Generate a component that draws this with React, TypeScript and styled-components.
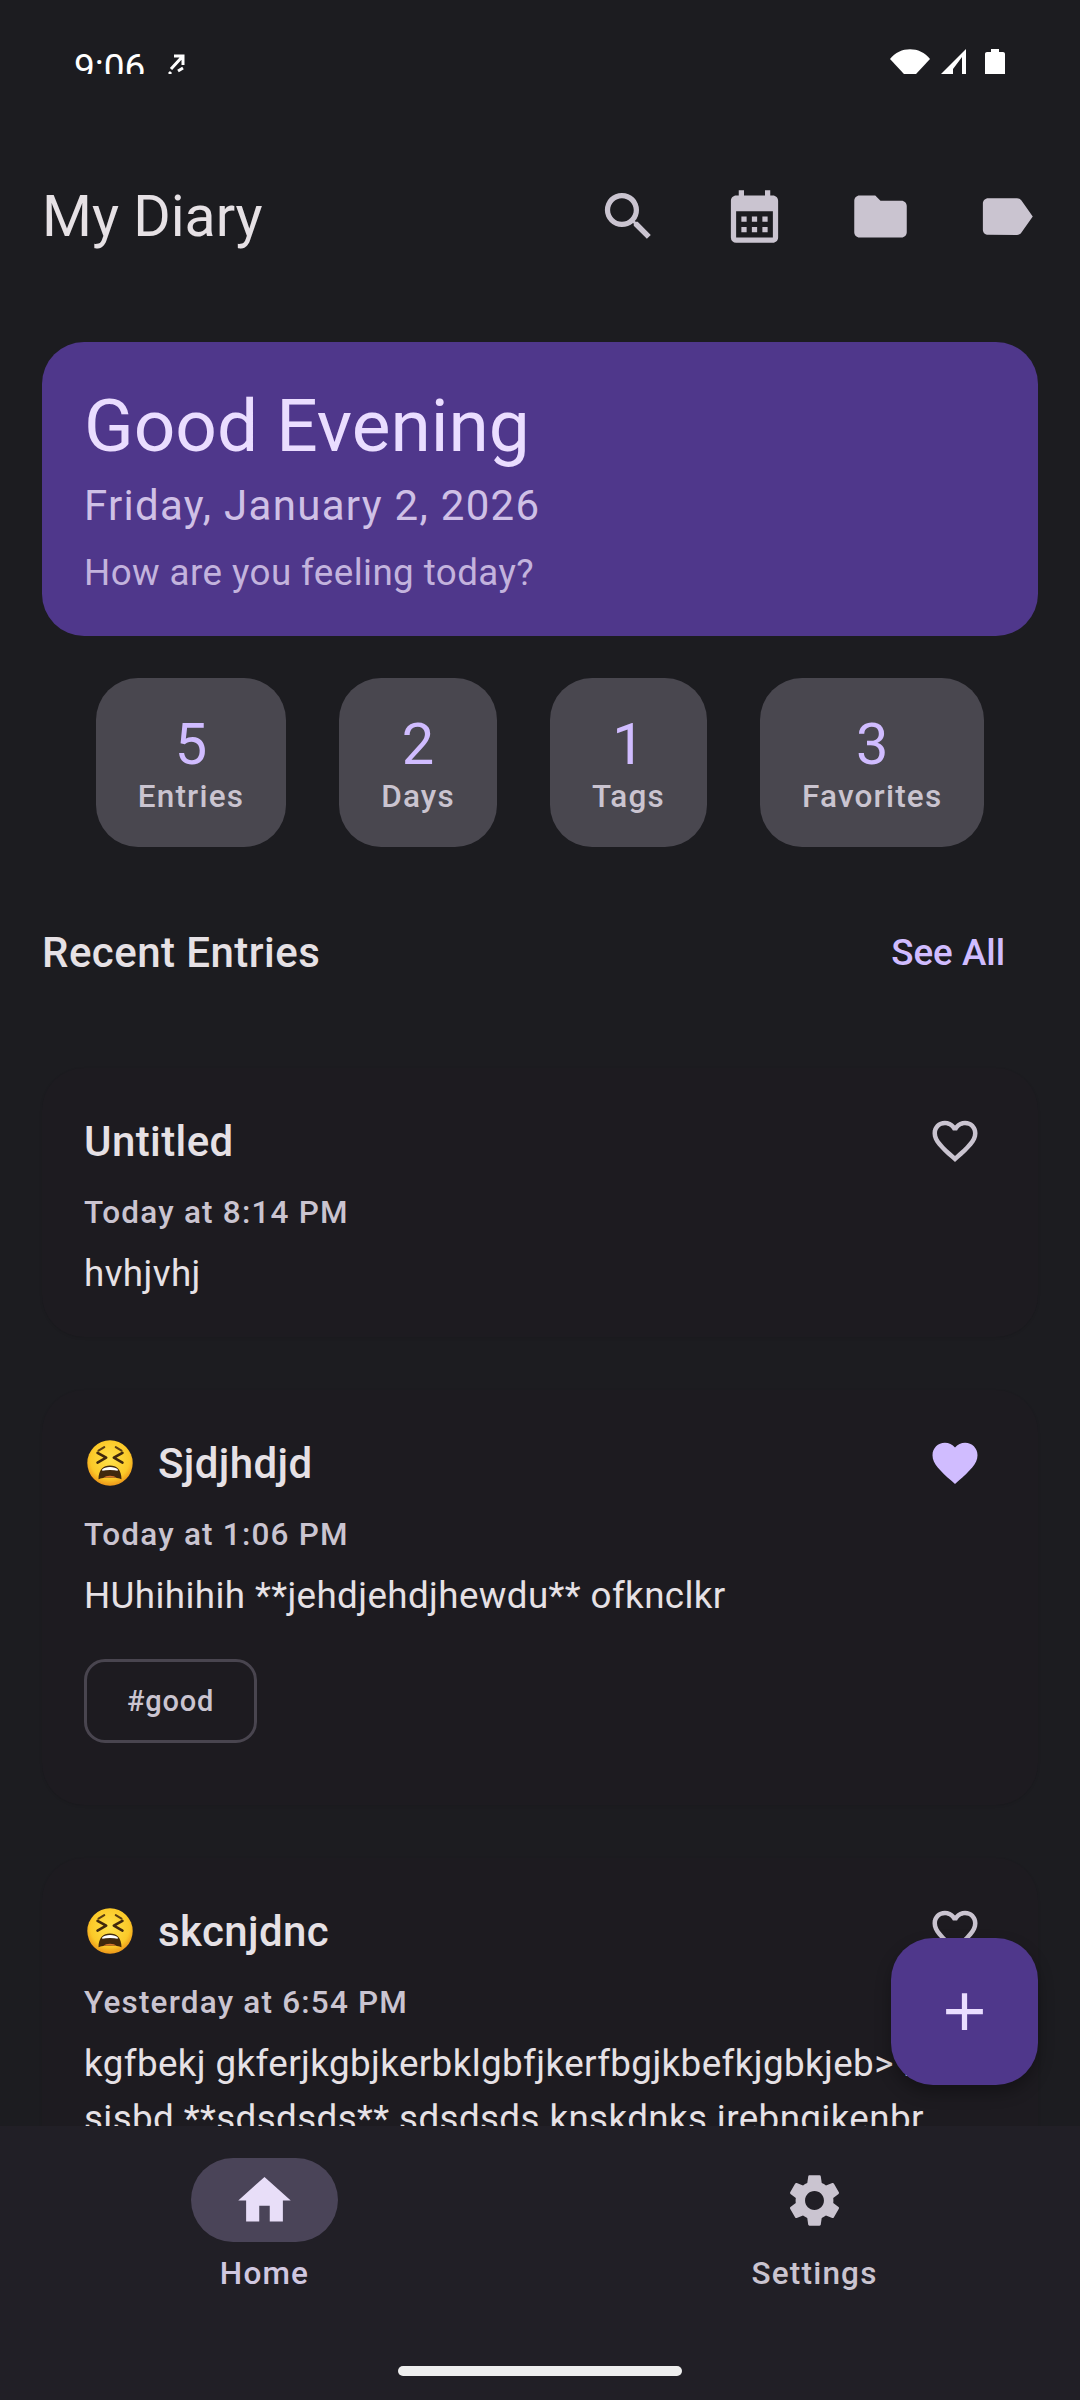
import React from "react";
import styled, { createGlobalStyle } from "styled-components";
import { MdSearch, MdCalendarMonth, MdFolder, MdLabel, MdHome, MdSettings, MdFavorite, MdFavoriteBorder, MdAdd } from "react-icons/md";

const GlobalStyle = createGlobalStyle`
  html, body {
    margin: 0;
    padding: 0;
    background: #1c1b1f;
  }
  * {
    box-sizing: border-box;
  }
`;

const Screen = styled.div`
  position: relative;
  display: flex;
  flex-direction: column;
  width: 1080px;
  height: 2400px;
  overflow: hidden;
  background: #1c1c20;
  font-family: Roboto, "Liberation Sans", sans-serif;
`;

const StatusClip = styled.div`
  display: flex;
  align-items: flex-start;
  justify-content: space-between;
  height: 74px;
  margin-bottom: 79px;
  padding: 46px 75px 0 74px;
  overflow: hidden;
  color: #fff;
  flex-shrink: 0;
`;

const StatusLeft = styled.div`
  display: flex;
  gap: 23px;
  align-items: flex-start;
  font-size: 37px;
  line-height: 43px;
`;

const StatusRight = styled.div`
  display: flex;
  align-items: flex-start;
  gap: 11px;
  margin-top: 3px;
`;

const SignalSvg = styled.svg`
  margin-right: 8px;
`;

const TopBar = styled.header`
  display: flex;
  align-items: center;
  justify-content: space-between;
  height: 126px;
  padding: 0 11px 0 42px;
  flex-shrink: 0;
`;

const Title = styled.h1`
  margin: 0;
  font-size: 57.2px;
  font-weight: 400;
  color: #e6e1e5;
`;

const TopActions = styled.div`
  display: flex;
`;

const ActionButton = styled.div`
  display: flex;
  align-items: center;
  justify-content: center;
  width: 126px;
  height: 126px;
  color: #cac4d0;
  font-size: 63px;
`;

const Scroll = styled.main`
  flex: 1;
  min-height: 0;
  overflow: hidden;
  padding: 63px 42px 0;
`;

const Hero = styled.section`
  display: flex;
  flex-direction: column;
  height: 294px;
  padding: 42px;
  border-radius: 42px;
  background: #4f378b;
`;

const Greeting = styled.div`
  font-size: 73px;
  line-height: 84px;
  color: #eaddff;
`;

const HeroDate = styled.div`
  margin-top: 13px;
  font-size: 42px;
  line-height: 50px;
  letter-spacing: 1.3px;
  color: #cfc0e6;
`;

const HeroPrompt = styled.div`
  margin-top: 17px;
  font-size: 36.75px;
  line-height: 50px;
  letter-spacing: 0.42px;
  color: #c3b3dd;
`;

const Stats = styled.section`
  display: flex;
  justify-content: center;
  gap: 53px;
  margin-top: 42px;
`;

const StatCard = styled.div`
  display: flex;
  flex-direction: column;
  align-items: center;
  justify-content: center;
  height: 169px;
  padding: 4px 42px 0;
  border-radius: 42px;
  background: #49474f;
`;

const StatValue = styled.div`
  font-size: 57.75px;
  line-height: 64px;
  color: #d0bcff;
`;

const StatLabel = styled.div`
  font-size: 31.5px;
  font-weight: 500;
  line-height: 42px;
  letter-spacing: 1.2px;
  color: #cac4d0;
`;

const SectionHeader = styled.div`
  display: flex;
  align-items: center;
  justify-content: space-between;
  margin-top: 77px;
  padding-right: 33px;
  height: 56px;
`;

const SectionTitle = styled.h2`
  margin: 0;
  font-size: 42px;
  font-weight: 500;
  letter-spacing: 0.45px;
  color: #e6e1e5;
`;

const SeeAll = styled.span`
  font-size: 36.75px;
  font-weight: 500;
  color: #d0bcff;
`;

const EntryList = styled.div`
  display: flex;
  flex-direction: column;
  gap: 53px;
  margin-top: 88px;
`;

const EntryCard = styled.article`
  padding: 42px 42px 36px;
  border-radius: 42px;
  background: #1d1b20;
  box-shadow: 0 1px 3px rgba(0, 0, 0, 0.1);
`;

const EntryHead = styled.div`
  display: flex;
  align-items: center;
  height: 62px;
`;

const EntryTitle = styled.h3`
  flex: 1;
  margin: 0;
  font-size: 42px;
  font-weight: 500;
  letter-spacing: 0.4px;
  color: #e6e1e5;
`;

const Mood = styled.svg`
  width: 46px;
  height: 46px;
  margin: 0 25px 0 3px;
  flex-shrink: 0;
`;

const Heart = styled.span<{ $on?: boolean }>`
  display: flex;
  margin-right: 14px;
  font-size: 54px;
  color: ${(p) => (p.$on ? "#d0bcff" : "#cac4d0")};
`;

const EntryDate = styled.div`
  margin-top: 20px;
  font-size: 31.5px;
  font-weight: 500;
  line-height: 42px;
  letter-spacing: 1.2px;
  color: #cac4d0;
`;

const EntryBody = styled.p`
  margin: 12px 0 0;
  font-size: 36.75px;
  line-height: 55px;
  letter-spacing: 0.4px;
  color: #e6e1e5;
`;

const Chip = styled.div`
  display: flex;
  align-items: center;
  width: fit-content;
  height: 84px;
  margin: 36px 0 26px;
  padding: 0 40px;
  border: 3px solid #49454f;
  border-radius: 21px;
  font-size: 29px;
  font-weight: 500;
  letter-spacing: 0.8px;
  color: #cac4d0;
`;

const Fab = styled.button`
  position: absolute;
  right: 42px;
  top: 1938px;
  display: flex;
  align-items: center;
  justify-content: center;
  width: 147px;
  height: 147px;
  padding: 0;
  border: 0;
  border-radius: 42px;
  background: #4f378b;
  color: #eaddff;
  font-size: 63px;
  box-shadow: 0 8px 16px rgba(0, 0, 0, 0.3);
`;

const BottomNav = styled.nav`
  display: flex;
  flex-direction: column;
  height: 274px;
  padding-top: 32px;
  background: #211f26;
  flex-shrink: 0;
`;

const NavItems = styled.div`
  display: flex;
  justify-content: space-between;
  padding: 0 192px 0 191px;
`;

const NavItem = styled.div`
  display: flex;
  flex-direction: column;
  align-items: center;
  width: 147px;
`;

const NavPill = styled.div<{ $active?: boolean }>`
  display: flex;
  align-items: center;
  justify-content: center;
  width: 147px;
  height: 84px;
  border-radius: 42px;
  font-size: 63px;
  background: ${(p) => (p.$active ? "#4a4458" : "transparent")};
  color: ${(p) => (p.$active ? "#e8def8" : "#cac4d0")};
`;

const NavLabel = styled.span<{ $active?: boolean }>`
  margin-top: 11px;
  font-size: 31.5px;
  font-weight: 500;
  line-height: 42px;
  letter-spacing: 1.2px;
  color: ${(p) => (p.$active ? "#d0c7e0" : "#cac4d0")};
`;

const HomeBar = styled.div`
  width: 284px;
  height: 10px;
  margin: auto auto 24px;
  border-radius: 5px;
  background: #eeeeee;
`;

const TiredFace = () => (
  <Mood viewBox="0 0 48 48">
    <defs>
      <radialGradient id="faceFill" cx="50%" cy="42%" r="55%">
        <stop offset="0%" stopColor="#ffe14a" />
        <stop offset="78%" stopColor="#fbc928" />
        <stop offset="100%" stopColor="#ef9f1c" />
      </radialGradient>
    </defs>
    <circle cx="24" cy="24" r="23.7" fill="url(#faceFill)" />
    <path d="M12 11 L18 7.5 M30 7.5 L36 11" stroke="#5a3d12" strokeWidth="2.2" strokeLinecap="round" fill="none" />
    <path d="M11 13.5 L20 18.5 L11 23.5 M37 13.5 L28 18.5 L37 23.5" stroke="#40290d" strokeWidth="2.7" strokeLinecap="round" strokeLinejoin="round" fill="none" />
    <path d="M12 41 C12 31 17 26.5 24 26.5 C31 26.5 36 31 36 41 C32 38.5 16 38.5 12 41 Z" fill="#40290d" />
    <path d="M16 31.5 C19.5 28 28.5 28 32 31.5 C28 30.2 20 30.2 16 31.5 Z" fill="#fff" stroke="#fff" strokeWidth="1.4" />
    <path d="M17 39.5 C20 36.5 28 36.5 31 39.5 C27 38.7 21 38.7 17 39.5 Z" fill="#d9762c" />
  </Mood>
);

const WifiIcon = () => (
  <svg width="40" height="30" viewBox="0 0 40 30">
    <path d="M0 10 C10 -3 30 -3 40 10 L20 31.5 Z" fill="#fff" />
  </svg>
);

const SignalIcon = () => (
  <SignalSvg width="25" height="30" viewBox="0 0 25 30">
    <path d="M25 0 V30 H0 V25 Z M21 8 L12 20 V30 H21 Z" fill="#fff" fillRule="evenodd" />
  </SignalSvg>
);

const BatteryIcon = () => (
  <svg width="20" height="32" viewBox="0 0 20 32">
    <path d="M6 0 H14 V3 H18 C19.1 3 20 3.9 20 5 V32 H0 V5 C0 3.9 .9 3 2 3 H6 Z" fill="#fff" />
  </svg>
);

const TransferIcon = () => (
  <svg width="18" height="30" viewBox="0 0 18 30" style={{ marginTop: 7 }}>
    <path d="M3 16 L14 4 M6 3 H15 V12" stroke="#fff" strokeWidth="3" fill="none" />
    <path d="M1 21 L3 19 M10 18 L15 15" stroke="#fff" strokeWidth="3" fill="none" />
  </svg>
);

export default function App() {
  return (
    <>
      <GlobalStyle />
      <Screen>
        <StatusClip>
          <StatusLeft>
            <span>9:06</span>
            <TransferIcon />
          </StatusLeft>
          <StatusRight>
            <WifiIcon />
            <SignalIcon />
            <BatteryIcon />
          </StatusRight>
        </StatusClip>

        <TopBar>
          <Title>My Diary</Title>
          <TopActions>
            <ActionButton><MdSearch /></ActionButton>
            <ActionButton><MdCalendarMonth /></ActionButton>
            <ActionButton><MdFolder /></ActionButton>
            <ActionButton><MdLabel /></ActionButton>
          </TopActions>
        </TopBar>

        <Scroll>
          <Hero>
            <Greeting>Good Evening</Greeting>
            <HeroDate>Friday, January 2, 2026</HeroDate>
            <HeroPrompt>How are you feeling today?</HeroPrompt>
          </Hero>

          <Stats>
            <StatCard><StatValue>5</StatValue><StatLabel>Entries</StatLabel></StatCard>
            <StatCard><StatValue>2</StatValue><StatLabel>Days</StatLabel></StatCard>
            <StatCard><StatValue>1</StatValue><StatLabel>Tags</StatLabel></StatCard>
            <StatCard><StatValue>3</StatValue><StatLabel>Favorites</StatLabel></StatCard>
          </Stats>

          <SectionHeader>
            <SectionTitle>Recent Entries</SectionTitle>
            <SeeAll>See All</SeeAll>
          </SectionHeader>

          <EntryList>
            <EntryCard>
              <EntryHead>
                <EntryTitle>Untitled</EntryTitle>
                <Heart><MdFavoriteBorder /></Heart>
              </EntryHead>
              <EntryDate>Today at 8:14 PM</EntryDate>
              <EntryBody>hvhjvhj</EntryBody>
            </EntryCard>

            <EntryCard>
              <EntryHead>
                <TiredFace />
                <EntryTitle>Sjdjhdjd</EntryTitle>
                <Heart $on><MdFavorite /></Heart>
              </EntryHead>
              <EntryDate>Today at 1:06 PM</EntryDate>
              <EntryBody>HUhihihih **jehdjehdjhewdu** ofknclkr</EntryBody>
              <Chip>#good</Chip>
            </EntryCard>

            <EntryCard>
              <EntryHead>
                <TiredFace />
                <EntryTitle>skcnjdnc</EntryTitle>
                <Heart><MdFavoriteBorder /></Heart>
              </EntryHead>
              <EntryDate>Yesterday at 6:54 PM</EntryDate>
              <EntryBody>
                kgfbekj gkferjkgbjkerbklgbfjkerfbgjkbefkjgbkjeb&gt; b
                <br />
                sisbd **sdsdsds** sdsdsds knskdnks irebngikenbr
              </EntryBody>
            </EntryCard>
          </EntryList>
        </Scroll>

        <Fab aria-label="New entry"><MdAdd /></Fab>

        <BottomNav>
          <NavItems>
            <NavItem>
              <NavPill $active><MdHome /></NavPill>
              <NavLabel $active>Home</NavLabel>
            </NavItem>
            <NavItem>
              <NavPill><MdSettings /></NavPill>
              <NavLabel>Settings</NavLabel>
            </NavItem>
          </NavItems>
          <HomeBar />
        </BottomNav>
      </Screen>
    </>
  );
}
